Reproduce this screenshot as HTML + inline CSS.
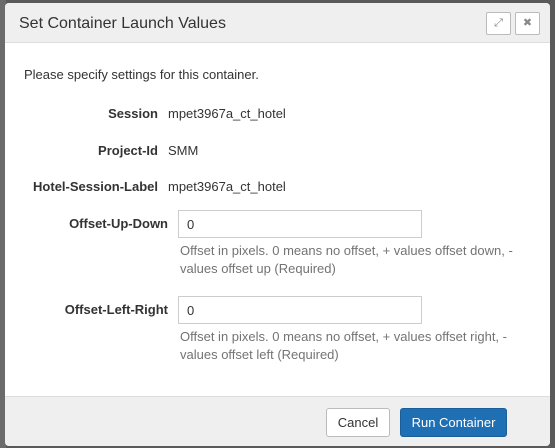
<!DOCTYPE html>
<html><head><style>
*{box-sizing:border-box;margin:0;padding:0}
body{width:555px;height:448px;background:#5a5a5a;font-family:"Liberation Sans",Arial,sans-serif;font-size:13px;color:#333;position:relative;overflow:hidden}
.bg{position:absolute;left:0;top:0;width:6px;height:448px;background:#6b6b6b}
.dlg{position:absolute;left:5px;top:3px;width:545px;height:443px;background:#fff;border-radius:4px;overflow:hidden}
.hd{height:40px;background:#efefef;border-bottom:1px solid #ddd;position:relative}
.hd h1{font-weight:normal;font-size:16px;color:#333;position:absolute;left:14px;top:12px}
.ib{position:absolute;top:9px;width:25px;height:23px;border:1px solid #bbb;border-radius:2px;background:#fff;color:#888;font-size:11px;text-align:center;line-height:21px}
.row{position:absolute;font-size:13px}
.lbl{position:absolute;font-weight:bold;text-align:right;white-space:nowrap}
.val{position:absolute;left:163px}
.inp{position:absolute;left:173px;width:244px;height:28px;border:1px solid #ccc;padding:6px 8px;font-size:13px}
.help{position:absolute;left:175px;width:340px;color:#737373;font-size:13px;line-height:18px}
.ft{position:absolute;left:0;bottom:0;width:545px;height:50px;background:#efefef;border-top:1px solid #ddd}
.btn{position:absolute;top:11px;height:29px;border-radius:3px;font-size:13px;text-align:center;line-height:27px}
</style></head><body>
<div class="bg"></div>
<div class="dlg">
 <div class="hd"><h1>Set Container Launch Values</h1>
  <div class="ib" style="left:481px">&#10530;</div>
  <div class="ib" style="left:510px">&#10006;</div>
 </div>
 <div class="row" style="left:19px;top:64px">Please specify settings for this container.</div>
 <div class="row" style="top:103px;left:0;width:545px"><span class="lbl" style="right:392px">Session</span><span class="val">mpet3967a_ct_hotel</span></div>
 <div class="row" style="top:140px;left:0;width:545px"><span class="lbl" style="right:392px">Project-Id</span><span class="val">SMM</span></div>
 <div class="row" style="top:176px;left:0;width:545px"><span class="lbl" style="right:392px">Hotel-Session-Label</span><span class="val">mpet3967a_ct_hotel</span></div>
 <div class="row" style="top:213px;left:0;width:545px"><span class="lbl" style="right:382px">Offset-Up-Down</span></div>
 <div class="inp" style="top:207px">0</div>
 <div class="help" style="top:239px">Offset in pixels. 0 means no offset, + values offset down, - values offset up (Required)</div>
 <div class="row" style="top:299px;left:0;width:545px"><span class="lbl" style="right:382px">Offset-Left-Right</span></div>
 <div class="inp" style="top:293px">0</div>
 <div class="help" style="top:325px">Offset in pixels. 0 means no offset, + values offset right, - values offset left (Required)</div>
 <div class="ft">
  <div class="btn" style="left:321px;width:64px;background:#fff;border:1px solid #bbb;color:#333">Cancel</div>
  <div class="btn" style="left:395px;width:107px;background:#1f6fb4;border:1px solid #1a5e9a;color:#fff">Run Container</div>
 </div>
</div>
</body></html>
